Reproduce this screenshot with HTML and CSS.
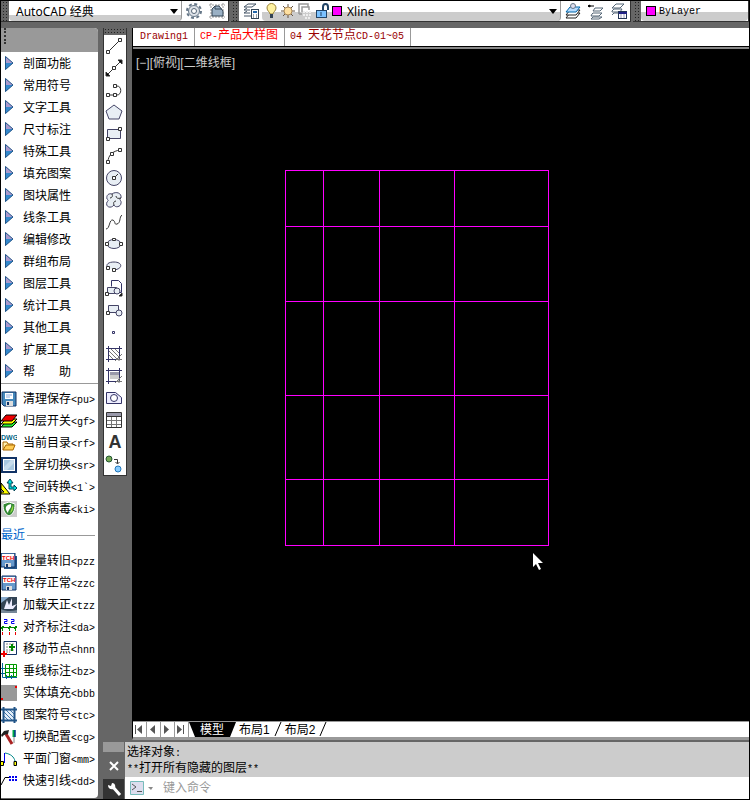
FILE: index.html
```
<!doctype html>
<html lang="zh-CN">
<head>
    <meta charset="UTF-8">
    <title>AutoCAD</title>
    <link rel="stylesheet" href="styles.css">
</head>
<body>
    <div class="top">
        <div class="bar bar-space">
            <i class="grip"></i>
            <label class="pick pick-space"><select aria-label="工作空间"><option>AutoCAD 经典</option></select></label>
            <button aria-label="设置"><svg width="18" height="18" viewBox="0 0 18 18"><circle cx="9" cy="9" r="7" fill="none" stroke="#678" stroke-width="2" stroke-dasharray="3 2.5"/><circle cx="9" cy="9" r="5.5" fill="#dde2e8" stroke="#678"/><circle cx="9" cy="9" r="2.5" fill="#fff" stroke="#567"/></svg></button>
            <button aria-label="工作空间设置"><svg width="18" height="18" viewBox="0 0 18 18"><path d="M3 1v16M15 1v16M1 3h16M1 15h16" stroke="#999" stroke-dasharray="2 1"/><path d="M4 14V7l3-3h4l4 5v5z" fill="#9ab0c4" stroke="#345"/><path d="M7 4v3h7" fill="none" stroke="#345"/></svg></button>
        </div>
        <div class="bar bar-layer">
            <i class="grip"></i>
            <button aria-label="图层特性"><svg width="18" height="18" viewBox="0 0 18 18"><path d="M6 2h8l-4 3H2zM2 8h6M2 11h6M2 14h7M5 6l-3 2M5 9l-3 2" fill="none" stroke="#456"/><rect x="9.500" y="7.500" width="7" height="9" fill="#fff" stroke="#345"/><path d="M11 10h4" stroke="#26a" stroke-width="2"/><path d="M11 13h1M14 13h1M11 15h1M14 15h1" stroke="#345"/></svg></button>
            <div class="layer">
                <svg width="16" height="18" viewBox="0 0 16 18"><path d="M6 12c0-2-3-3-3-6a4.500 4.500 0 0 1 9 0c0 3-3 4-3 6z" fill="#fff2a0" stroke="#98803a"/><path d="M6 13h3M6 15h3" stroke="#345" stroke-width="2"/></svg>
                <svg width="16" height="18" viewBox="0 0 16 18"><path d="M8 2v3M8 13v3M1 9h3M12 9h3M3 4l2 2M11 12l2 2M13 4l-2 2M3 14l2-2" stroke="#654"/><circle cx="8" cy="9" r="4" fill="#ffe0a0" stroke="#a85"/></svg>
                <svg width="18" height="18" viewBox="0 0 18 18"><path d="M3 12V2h9v3M3 12h3M6 10V5h7v3" fill="none" stroke="#999" stroke-width="1.500"/><path d="M7 10h9M7 13h9M9 16h6" stroke="#eee" stroke-width="2" stroke-dasharray="2 1"/></svg>
                <svg width="16" height="18" viewBox="0 0 16 18"><path d="M9 8V5c0-4 5-4 5 0v3" fill="none" stroke="#246" stroke-width="2"/><rect x="2.500" y="8.500" width="10" height="7" fill="#7cc2ff" stroke="#246"/><path d="M7 10v4" stroke="#246"/></svg>
                <i class="swatch"></i>
                <label class="pick"><select aria-label="图层"><option>Xline</option></select></label>
            </div>
            <button aria-label="置为当前图层"><svg width="18" height="18" viewBox="0 0 18 18"><path d="M6 11h10l-4 5H2z" fill="#fff" stroke="#222"/><path d="M6 8h10l-4 5H2z" fill="#fff" stroke="#222"/><path d="M6 5h10l-4 5H2z" fill="#b8dcff" stroke="#06a"/><circle cx="9" cy="4" r="2.500" fill="#dde" stroke="#678"/></svg></button>
            <button aria-label="上一个图层"><svg width="18" height="18" viewBox="0 0 18 18"><path d="M8 6h8l-3 3H6zM5 12l1-1h9l-3 3H4zM5 16l1-1h9l-3 2H4z" fill="#fff" stroke="#567"/><path d="M1 4h6M1 4l2-1v2z" fill="#000" stroke="#000"/></svg></button>
            <button aria-label="图层状态"><svg width="18" height="18" viewBox="0 0 18 18"><path d="M6 2h8l-4 4H2zM2 9l2-2h8l-2 3H2zM2 13l2-2h4" fill="none" stroke="#567"/><rect x="8.500" y="9.500" width="8" height="7" fill="#fff" stroke="#235"/><path d="M9 11h8" stroke="#228" stroke-width="2"/><path d="M10 13h2M13 13h2M10 15h2M13 15h2" stroke="#99b"/></svg></button>
        </div>
        <div class="bar bar-color">
            <i class="grip"></i>
            <div class="layer">
                <i class="swatch"></i>
                <label class="pick pick-plain"><select class="en" aria-label="颜色"><option>ByLayer</option></select></label>
            </div>
        </div>
    </div>

    <div class="work">
        <div class="side">
            <div class="side-head"></div>
            <ul class="list" id="menu"></ul>
            <ul class="list cmds" id="cmds">
                <li><a href="#"><svg width="16" height="16" viewBox="0 0 16 16"><path d="M1 1h14v14H3l-2-2z" fill="#48b" stroke="#136"/><path d="M4 2h8v6H4z" fill="#fff"/><path d="M5 4h6M5 6h4" stroke="#8ad"/><path d="M5 10h7v5H5z" fill="#ddd"/><path d="M6 11h2v3H6z" fill="#136"/></svg><span>清理保存<b class="en">&lt;pu&gt;</b></span></a></li>
                <li><a href="#"><svg width="16" height="16" viewBox="0 0 16 16"><path d="M5 9h11l-5 5H0z" fill="#2e3" stroke="#000"/><path d="M5 6h11l-5 5H0z" fill="#ff0" stroke="#000"/><path d="M5 2h11l-5 6H0z" fill="#e00" stroke="#000"/></svg><span>归层开关<b class="en">&lt;gf&gt;</b></span></a></li>
                <li><a href="#"><svg width="16" height="18" viewBox="0 0 16 18"><text x="0" y="6" class="dwg">DWG</text><path d="M2 16V8h4l1 2h5v2" fill="#fff0b0" stroke="#a60"/><path d="M2 16l3-5h9l-2 5z" fill="#fc5" stroke="#a60"/></svg><span>当前目录<b class="en">&lt;rf&gt;</b></span></a></li>
                <li><a href="#"><svg width="16" height="16" viewBox="0 0 16 16"><path d="M1 1h14v14H1z" fill="#fff" stroke="#136" stroke-width="2"/><path d="M3 3h10v10H3z" fill="#a8c8e0"/><path d="M3 10l7-7h3v3l-7 7H3z" fill="#c6dcec"/></svg><span>全屏切换<b class="en">&lt;sr&gt;</b></span></a></li>
                <li><a href="#"><svg width="16" height="16" viewBox="0 0 16 16"><path d="M0 4l9 11H0z" fill="#ff0" stroke="#000"/><path d="M0 10l3 3H0z" fill="#fff" stroke="#000"/><path d="M8 10V4H6l3-4 3 4h-2v4h3V6l3 3-3 3v-2z" fill="#0dd" stroke="#045"/></svg><span>空间转换<b class="en">&lt;1`&gt;</b></span></a></li>
                <li><a href="#"><svg width="16" height="16" viewBox="0 0 16 16"><path d="M0 0h16v16H0z" fill="#ccc"/><path d="M8 1l6 2c0 7-2 10-6 12-4-2-6-5-6-12z" fill="#383" stroke="#fff"/><path d="M10 3c-8 2-5 6-3 9 0-4 4-4 3-9z" fill="#fff"/><path d="M12 4c1 4-1 7-3 8 1-3 2-5 3-8z" fill="#9d4"/></svg><span>查杀病毒<b class="en">&lt;ki&gt;</b></span></a></li>
            </ul>
            <h2 class="recent">最近</h2>
            <ul class="list" id="recent">
                <li><a href="#"><svg width="16" height="16" viewBox="0 0 16 16"><path d="M3 3h13v13H3z" fill="#258"/><path d="M0 0h14v14H0z" fill="#69c" stroke="#136"/><path d="M1 1h12v6H1z" fill="#fff"/><text x="1" y="7" class="tch">TCH</text><path d="M4 10h6v4H4z" fill="#ddd"/><path d="M5 11h2v3H5z" fill="#136"/></svg><span>批量转旧<b class="en">&lt;pzz</b></span></a></li>
                <li><a href="#"><svg width="16" height="16" viewBox="0 0 16 16"><path d="M1 1h14v14H1z" fill="#69c" stroke="#136"/><path d="M2 2h12v6H2z" fill="#fff"/><text x="2" y="7" class="tch">TCH</text><path d="M5 11h6v4H5z" fill="#ddd"/><path d="M6 12h2v3H6z" fill="#136"/></svg><span>转存正常<b class="en">&lt;zzc</b></span></a></li>
                <li><a href="#"><svg width="16" height="16" viewBox="0 0 16 16"><path d="M0 0h16v16H0z" fill="#345"/><path d="M0 0h8L0 6z" fill="#8ac"/><path d="M4 9l2-6 2 5 3-7v8l5-2-4 5H3z" fill="#eef"/><path d="M0 12c6 3 11 2 16 1v3H0z" fill="#789"/></svg><span>加载天正<b class="en">&lt;tzz</b></span></a></li>
                <li><a href="#"><svg width="16" height="16" viewBox="0 0 16 16"><path d="M0 8.500h16M1.500 7v5M8.500 7v5M14.500 7v5M3 7l-3 3M10 7l-3 3M16 7l-3 3" stroke="#080"/><path d="M1.500 13v3M8.500 13v3M14.500 13v3" stroke="#e00"/><path d="M3 .5h3v2H3.500v2h3M10 .5h3v2h-2.500v2h3" fill="none" stroke="#00e"/></svg><span>对齐标注<b class="en">&lt;da&gt;</b></span></a></li>
                <li><a href="#"><svg width="16" height="16" viewBox="0 0 16 16"><path d="M3 .5h12.500v13H3z" fill="#fff" stroke="#136"/><path d="M5 3h8M5 6h4M5 9h8M5 11h4" stroke="#888" stroke-dasharray="2 1"/><path d="M11 3v7M8 6h6" stroke="#080" stroke-width="2"/><path d="M3 10v6M0 13h6" stroke="#e00" stroke-width="2"/></svg><span>移动节点<b class="en">&lt;hnn</b></span></a></li>
                <li><a href="#"><svg width="16" height="16" viewBox="0 0 16 16"><path d="M4.500 1.500h11v12h-11zM8.500 1v13M12.500 1v13M4 5.500h11M4 9.500h11" fill="none" stroke="#090"/><path d="M1.500 0v14.500H16M0 5.500h4M0 10.500h4M5.500 12v4M10.500 12v4" fill="none" stroke="#069"/></svg><span>垂线标注<b class="en">&lt;bz&gt;</b></span></a></li>
                <li><a href="#"><svg width="16" height="16" viewBox="0 0 16 16"><path d="M0 0h16v16H0z" fill="#999"/><path d="M14 1h2v2h-2zM0 13h2v2H0z" fill="#e00"/></svg><span>实体填充<b class="en">&lt;bbb</b></span></a></li>
                <li><a href="#"><svg width="16" height="16" viewBox="0 0 16 16"><path d="M3 3h10v10H3z" fill="#e4eef8"/><path d="M3 5l8 8M3 9l4 4M5 3l8 8M9 3l4 4" stroke="#47a"/><path d="M2.500 0v16M13.500 0v16M0 2.500h16M0 13.500h16" stroke="#258" stroke-width="2"/></svg><span>图案符号<b class="en">&lt;tc&gt;</b></span></a></li>
                <li><a href="#"><svg width="16" height="16" viewBox="0 0 16 16"><path d="M5 5l6 10" stroke="#a22" stroke-width="3"/><path d="M0 6l3-4 5-1-1 4-4 1-2 2z" fill="#222"/><path d="M13 1v7" stroke="#0a4" stroke-width="3"/><path d="M14 1v7" stroke="#00a"/><path d="M13 8v6" stroke="#888"/></svg><span>切换配置<b class="en">&lt;cg&gt;</b></span></a></li>
                <li><a href="#"><svg width="16" height="16" viewBox="0 0 16 16"><path d="M3.500 12V2" stroke="#00e"/><path d="M4 2c6 1 9 4 10 8" fill="none" stroke="#088"/><path d="M-.5 10.500h3v4h-3zM13 10.500h2.500v4H13z" fill="#ff0" stroke="#000"/></svg><span>平面门窗<b class="en">&lt;mm&gt;</b></span></a></li>
                <li><a href="#"><svg width="16" height="16" viewBox="0 0 16 16"><path d="M0 12l4-7.500h4" fill="none" stroke="#000"/><path d="M8 4h8M8 7h8" stroke="#00e" stroke-width="2" stroke-dasharray="2 1"/></svg><span>快速引线<b class="en">&lt;dd&gt;</b></span></a></li>
            </ul>
        </div>

        <div class="right">
            <div class="area">
                <div class="tools">
                    <i class="grip-h"></i>
                    <button aria-label="直线"><svg viewBox="0 0 18 18"><path d="M3 15L15 3"/><path class="n" d="M1.500 13.500h3v3h-3zM13.500 1.500h3v3h-3z"/></svg></button>
                    <button aria-label="构造线"><svg viewBox="0 0 18 18"><path d="M3 15L15 3"/><path class="k" d="M1 17v-4l4 4zM17 1v4l-4-4z"/><path class="n" d="M7.500 7.500h3v3h-3z"/></svg></button>
                    <button aria-label="多段线"><svg viewBox="0 0 18 18"><path d="M3 14h6M10 5h2c5 0 5 9 0 9h-2" /><path class="n" d="M1.500 12.500h3v3h-3zM8.500 3.500h3v3h-3zM8.500 12.500h3v3h-3z"/></svg></button>
                    <button aria-label="正多边形"><svg viewBox="0 0 18 18"><path class="g" d="M9 2l8 6-3 8H4L1 8z"/></svg></button>
                    <button aria-label="矩形"><svg viewBox="0 0 18 18"><path class="g" d="M2.500 4.500h13v9h-13z"/><path class="n" d="M1.500 12.500h3v3h-3zM13.500 2.500h3v3h-3z"/></svg></button>
                    <button aria-label="圆弧"><svg viewBox="0 0 18 18"><path d="M3 15c0-7 5-11 12-12"/><path class="n" d="M1.500 13.500h3v3h-3zM5.500 5.500h3v3h-3zM13.500 1.500h3v3h-3z"/></svg></button>
                    <button aria-label="圆"><svg viewBox="0 0 18 18"><circle class="g" cx="9" cy="9" r="7.500"/><path d="M9 9l4-4"/><path class="n" d="M7.500 7.500h3v3h-3z"/></svg></button>
                    <button aria-label="修订云线"><svg viewBox="0 0 18 18"><path class="g" d="M7 3c4-3 10-1 9 4-3 1 1 3 0 5 0 4-6 5-7 2-3 4-9 2-7-3 2-2 1-2 0-3-1-4 2-6 5-5z"/><path d="M7 3c1 2 0 4-2 4M16 7c-3 1-5 0-5-2M9 14c-1-2 0-4 2-4"/></svg></button>
                    <button aria-label="样条曲线"><svg viewBox="0 0 18 18"><path d="M1 16c4 0 3-10 7-9 3 2 1 5 4 4 4-1 2-7 5-9" /></svg></button>
                    <button aria-label="椭圆"><svg viewBox="0 0 18 18"><ellipse class="g" cx="9" cy="9" rx="7" ry="4.500"/><path class="n" d="M.5 7.500h3v3h-3zM14.500 7.500h3v3h-3zM7.500 3.500h3v2h-3z"/></svg></button>
                    <button aria-label="椭圆弧"><svg viewBox="0 0 18 18"><path class="g" d="M3 11c-3-4 1-6 6-6 9 0 9 7 0 8"/><path class="n" d="M1.500 9.500h3v3h-3zM7.500 11.500h3v3h-3z"/></svg></button>
                    <button aria-label="插入块"><svg viewBox="0 0 18 18"><path class="b" d="M6.500 7.500v-6h7l3 3v9h-4"/><path class="g" d="M2.500 8.500h9v6h-9z"/><circle class="g" cx="12" cy="12" r="3"/><path class="n" d="M.5 13.500h3v3h-3z"/><path class="k" d="M17 14v3h-3z"/></svg></button>
                    <button aria-label="创建块"><svg viewBox="0 0 18 18"><path class="g" d="M3.500 4.500h10v7h-10z"/><circle class="g" cx="14" cy="12" r="3"/><path class="n" d="M1.500 10.500h3v3h-3z"/></svg></button>
                    <button aria-label="点"><svg viewBox="0 0 18 18"><path class="b" d="M7.500 8.500h2v2h-2z"/></svg></button>
                    <button aria-label="图案填充"><svg viewBox="0 0 18 18"><path class="h" d="M4 6l9 9M4 10l5 5M6 4l9 9M10 4l5 5"/><path class="b" d="M3.500 1v16M14.500 1v13M1 3.500h16M1 14.500h14"/><path class="h" d="M10 16l7-7M14 16v-4M12 14.500h5"/></svg></button>
                    <button aria-label="渐变色"><svg viewBox="0 0 18 18"><path class="s" d="M5 5h9v3H5z"/><path class="s2" d="M5 8h9v4H5z"/><path class="b" d="M3.500 1v16M14.500 1v13M1 3.500h16M1 14.500h14"/><path class="h" d="M10 16l7-7M14 16v-4M12 14.500h5"/></svg></button>
                    <button aria-label="面域"><svg viewBox="0 0 18 18"><path class="b l" d="M1.500 14.500v-11h9l6 5v6z"/><circle class="b n" cx="9" cy="9" r="3.500"/></svg></button>
                    <button aria-label="表格"><svg viewBox="0 0 18 18"><path class="s" d="M2 2h14v4H2z"/><path class="h" d="M2 9.500h14M2 13.500h14M6.500 5v11M11.500 5v11"/><path d="M1.500 1.500h15v15h-15zM1.500 5.500h15"/></svg></button>
                    <button class="big" aria-label="多行文字">A</button>
                    <button aria-label="添加选定对象"><svg viewBox="0 0 18 18"><circle cx="4" cy="4" r="3" class="green"/><circle cx="13" cy="14" r="3" class="blue"/><path d="M9 4.500h3.500v4M10.500 7l2 2 2-2"/></svg></button>
                </div>
                <div class="main">
                    <nav class="files">
                        <a href="#"><b class="en">Drawing1</b></a>
                        <a href="#" class="cur"><b class="en">CP-</b>产品大样图</a>
                        <a href="#"><b class="en">04 </b>天花节点<b class="en">CD-01~05</b></a>
                    </nav>
                    <div class="canvas">
                        <p>[−][俯视][二维线框]</p>
                        <!-- 图形 -->
                        <svg class="draw" width="264" height="400" viewBox="0 0 264 400">
                            <path class="grid" d="M.5 0v376M38.500 0v376M94.500 0v376M169.500 0v376M263.500 0v376M0 .5h264M0 56.500h264M0 131.500h264M0 225.500h264M0 309.500h264M0 375.500h264"/>
                            <path fill="#fff" d="M248 383v14l3-3 3 6 2-1-3-6h5z"/>
                        </svg>
                    </div>
                    <div class="layouts">
                        <button class="go" aria-label="第一个"><svg width="11" height="9" viewBox="0 0 11 9"><path d="M2.500 0v9" stroke="#555"/><path d="M9 0v9L4 4.500z" fill="#555"/></svg></button>
                        <button class="go" aria-label="上一个"><svg width="11" height="9" viewBox="0 0 11 9"><path d="M8 0v9L3 4.500z" fill="#555"/></svg></button>
                        <button class="go" aria-label="下一个"><svg width="11" height="9" viewBox="0 0 11 9"><path d="M3 0v9l5-4.500z" fill="#555"/></svg></button>
                        <button class="go" aria-label="最后一个"><svg width="11" height="9" viewBox="0 0 11 9"><path d="M2 0v9l5-4.500z" fill="#555"/><path d="M8.500 0v9" stroke="#555"/></svg></button>
                        <button class="tab cur">模型</button>
                        <button class="tab">布局1</button>
                        <svg width="8" height="14" viewBox="0 0 8 14"><path d="M7 0L1 14" stroke="#000"/></svg>
                        <button class="tab">布局2</button>
                        <svg width="8" height="14" viewBox="0 0 8 14"><path d="M7 0L1 14" stroke="#000"/></svg>
                    </div>
                </div>
            </div>
            <div class="command">
                <div class="cmd-ctr">
                    <i></i>
                    <button aria-label="关闭"><svg width="10" height="10" viewBox="0 0 10 10"><path d="M1 1l8 8M9 1L1 9" stroke="#fff" stroke-width="2"/></svg></button>
                    <button class="wrench" aria-label="自定义"><svg width="16" height="16" viewBox="0 0 16 16"><path d="M7 6l7 8" stroke="#fff" stroke-width="3"/><path d="M2 4l3 1 1-3c4 0 4 5 2 6-3 1-6 0-6-4z" fill="#fff"/></svg></button>
                </div>
                <div class="cmd-box">
                    <div class="cmd-log">
                        <p>选择对象<b class="en">:</b></p>
                        <p><b class="en">**</b>打开所有隐藏的图层<b class="en">**</b></p>
                    </div>
                    <div class="cmd-line">
                        <svg width="26" height="16" viewBox="0 0 26 16"><path d="M1.500 1.500h13v13h-13z" fill="#dde" stroke="#7bb"/><path d="M3 4l4 3-4 3M8 11.500h5" fill="none" stroke="#555"/><path d="M19 7h5l-2 3z" fill="#888"/></svg>
                        <input type="text" placeholder="键入命令" aria-label="键入命令">
                    </div>
                </div>
            </div>
        </div>
    </div>
<script>
    var names=["剖面功能","常用符号","文字工具","尺寸标注","特殊工具","填充图案","图块属性","线条工具","编辑修改","群组布局","图层工具","统计工具","其他工具","扩展工具","帮　　助"];
    var menu=document.getElementById("menu");
    //左侧菜单
    for(var i=0; i<names.length; i++){
        var li=document.createElement("li");
        li.innerHTML='<a href="#"><svg width="16" height="16" viewBox="0 0 16 16"><path d="M4 1l8 7H4z" fill="#a9c"/><path d="M4 8h8l-8 7z" fill="#38c"/><path d="M4.500 1.500v13l7.500-6.500z" fill="none" stroke="#258"/></svg><span>'+names[i]+'</span></a>';
        menu.appendChild(li);
    }
</script>
</body>
</html>
```
FILE: styles.css
```
* {
    margin: 0;
    padding: 0;
    box-sizing: border-box;
    list-style: none;
}
body{
    min-height: 100vh;
    display: flex;
    flex-direction: column;
    border: 1px solid #000;
    background: #666;
    font: 12px/22px "Liberation Sans", "Noto Sans CJK SC", sans-serif;
    color: #000;
    overflow: hidden;
}
a{
    color: inherit;
    text-decoration: none;
}
button,select,input{
    border: 0;
    background: none;
    font: inherit;
    color: inherit;
}
svg{
    display: block;
    flex: none;
}
.en{
    font-family: "Liberation Mono", monospace;
    font-size: 10px;
    font-weight: normal;
    white-space: pre;
}

/* 顶部工具条 */
.top{
    display: flex;
    gap: 2px;
    height: 25px;
    padding-bottom: 4px;
}
.bar{
    display: flex;
    align-items: center;
    background: #fff;
    border-bottom: 1px solid #333;
    border-right: 1px solid #333;
}
.bar button{
    width: 23px;
    display: flex;
    justify-content: center;
}
.bar-space{
    width: 228px;
}
.bar-layer{
    width: 400px;
}
.bar-color{
    flex: 1;
}
.grip{
    width: 8px;
    align-self: stretch;
    flex: none;
    background: radial-gradient(#222 30%, #666 40%) 0 0 / 3px 3px;
    border-left: 1px solid #666;
    border-right: 2px solid #666;
}
.pick{
    flex: 1;
    display: grid;
    align-items: center;
    height: 20px;
}
.pick select,.pick::after{
    grid-area: 1 / 1;
}
.pick::after{
    content: "";
    justify-self: end;
    margin-right: 3px;
    border: 4px solid transparent;
    border-top: 5px solid #000;
    border-bottom: 0;
    pointer-events: none;
}
.pick-plain::after{
    display: none;
}
.pick select{
    appearance: none;
    width: 100%;
    height: 20px;
    padding-left: 5px;
    font-family: "Noto Sans", "Noto Sans CJK SC", sans-serif;
}
.pick select.en{
    padding-left: 3px;
    font-family: "Liberation Mono", monospace;
    font-size: 10px;
}
.pick-space,.layer{
    background: linear-gradient(#fff 55%, #ccc 55%);
    border-right: 1px solid #999;
    border-radius: 0 0 4px 4px;
}
.pick-space{
    background: linear-gradient(#fff 70%, #ccc 70%);
}
.pick-space select{
    padding-left: 7px;
}
.layer{
    flex: 1;
    display: flex;
    align-items: center;
    padding-left: 2px;
}
.bar-color .layer{
    padding-left: 3px;
    border-right: 0;
}
.swatch{
    width: 10px;
    height: 10px;
    margin-left: 2px;
    background: #f0f;
    border: 1px solid #000;
}

/* 左侧面板 */
.work{
    flex: 1;
    display: flex;
    gap: 5px;
    padding-top: 2px;
}
.side{
    width: 97px;
    background: #fff;
    border-radius: 0 4px 4px 0;
    margin-bottom: 1px;
}
.side-head{
    height: 24px;
    background: #999;
    border-radius: 0 4px 0 0;
}
.side-head::before{
    content: "";
    display: block;
    width: 3px;
    height: 16px;
    border-right: 2px dotted #333;
}
.list a{
    display: flex;
    align-items: center;
    gap: 6px;
    height: 22px;
}
.list a span{
    padding-top: 1px;
    white-space: nowrap;
}
.cmds{
    margin-top: 1px;
    padding-top: 4px;
    border-top: 1px solid #999;
}
.recent{
    display: flex;
    align-items: center;
    height: 30px;
    gap: 2px;
    padding-right: 3px;
    font-size: 12px;
    font-weight: normal;
    color: #06c;
}
.recent::after{
    content: "";
    flex: 1;
    height: 1px;
    background: #999;
}
.dwg{
    font: bold 7px "Liberation Sans", sans-serif;
    fill: #068;
}
.tch{
    font: bold 6px "Liberation Sans", sans-serif;
    fill: #e00;
}

/* 绘图工具 */
.right{
    flex: 1;
    min-width: 0;
    display: flex;
    flex-direction: column;
}
.area{
    flex: 1;
    display: flex;
    align-items: flex-start;
    gap: 5px;
}
.tools{
    width: 24px;
    background: #fff;
    border: 1px solid #333;
    border-top: 0;
}
.grip-h{
    display: block;
    height: 7px;
    background: radial-gradient(#222 30%, #666 40%) 0 0 / 3px 3px;
}
.tools button{
    display: block;
    width: 22px;
    height: 22px;
    padding: 2px 1px;
}
.tools svg{
    width: 18px;
    height: 18px;
    fill: none;
    stroke: #333;
}
.tools .n{
    fill: #fff;
}
.tools .k{
    fill: #000;
}
.tools .g{
    fill: #e8eef4;
    stroke: #446;
}
.tools .b{
    stroke: #336;
}
.tools .l{
    fill: #eef;
}
.tools .h{
    stroke: #777;
}
.tools .s{
    fill: #99a;
    stroke: none;
}
.tools .s2{
    fill: #ccc;
    stroke: none;
}
.tools .green{
    fill: #7a5;
    stroke: #253;
}
.tools .blue{
    fill: #8cf;
    stroke: #27b;
}
.tools .big{
    padding: 0;
    font: bold 18px/22px "Liberation Sans", sans-serif;
    color: #333;
}

/* 图纸区 */
.main{
    flex: 1;
    align-self: stretch;
    display: flex;
    flex-direction: column;
    border-left: 1px solid #000;
    border-bottom: 3px solid #999;
}
.files{
    display: flex;
    height: 19px;
    line-height: 14px;
    background: #fff;
    border-bottom: 1px solid #000;
    color: #900;
}
.files a{
    padding: 0 6px 0 5px;
    border-right: 1px solid #999;
    white-space: nowrap;
}
.files a:first-child{
    padding-left: 7px;
}
.files a.cur{
    color: #f00;
}
.canvas{
    flex: 1;
    border-top: 2px solid #888;
    background: #000;
    color: #ccc;
}
.canvas p{
    padding: 3px 3px 0;
}
.draw{
    margin: 96px 0 0 152px;
}
.grid{
    fill: none;
    stroke: #f0f;
}
.layouts{
    display: flex;
    height: 16px;
    background: #fff;
    border-top: 1px solid #999;
    line-height: 16px;
}
.go{
    width: 14px;
    display: flex;
    align-items: center;
    border-right: 1px solid #999;
}
.tab{
    padding: 0 4px 0 3px;
}
.tab.cur{
    padding: 0 12px 0 11px;
    background: #000;
    color: #fff;
    clip-path: polygon(0 0, 100% 0, calc(100% - 6px) 100%, 6px 100%);
}

/* 命令行 */
.command{
    display: flex;
    gap: 1px;
    margin-top: 2px;
}
.cmd-ctr{
    width: 21px;
    display: flex;
    flex-direction: column;
    align-items: center;
}
.cmd-ctr i{
    width: 21px;
    height: 10px;
    background: #999;
}
.cmd-ctr button{
    flex: 1;
    display: flex;
    align-items: center;
}
.cmd-ctr .wrench{
    flex: none;
    width: 21px;
    height: 20px;
    padding: 0 3px;
    background: #333;
}
.cmd-box{
    flex: 1;
    background: #ccc;
    line-height: 15px;
}
.cmd-log{
    padding: 3px 2px 0;
}
.cmd-line{
    display: flex;
    align-items: center;
    gap: 8px;
    height: 22px;
    padding-left: 4px;
    background: #fff;
}
.cmd-line input{
    flex: 1;
    height: 20px;
    outline: 0;
}
.cmd-line input::placeholder{
    color: #999;
}
```
